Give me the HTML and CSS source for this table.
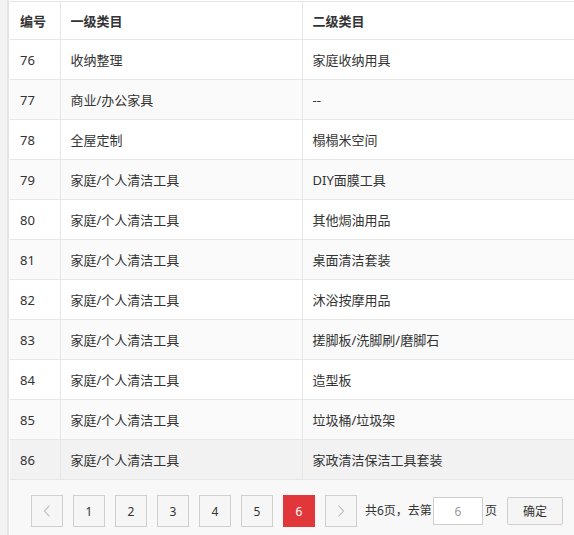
FILE: index.html
```html
<!DOCTYPE html>
<html lang="zh-CN">
<head>
<meta charset="utf-8">
<link rel="stylesheet" href="styles.css">
</head>
<body>
<div class="page">
  <div class="panel">
    <table class="grid">
      <colgroup><col class="c1"><col class="c2"><col class="c3"></colgroup>
      <thead>
        <tr><th>编号</th><th>一级类目</th><th>二级类目</th></tr>
      </thead>
      <tbody>
        <tr><td>76</td><td>收纳整理</td><td>家庭收纳用具</td></tr>
        <tr class="alt"><td>77</td><td>商业/办公家具</td><td>--</td></tr>
        <tr><td>78</td><td>全屋定制</td><td>榻榻米空间</td></tr>
        <tr class="alt"><td>79</td><td>家庭/个人清洁工具</td><td>DIY面膜工具</td></tr>
        <tr><td>80</td><td>家庭/个人清洁工具</td><td>其他焗油用品</td></tr>
        <tr class="alt"><td>81</td><td>家庭/个人清洁工具</td><td>桌面清洁套装</td></tr>
        <tr><td>82</td><td>家庭/个人清洁工具</td><td>沐浴按摩用品</td></tr>
        <tr class="alt"><td>83</td><td>家庭/个人清洁工具</td><td>搓脚板/洗脚刷/磨脚石</td></tr>
        <tr><td>84</td><td>家庭/个人清洁工具</td><td>造型板</td></tr>
        <tr class="alt"><td>85</td><td>家庭/个人清洁工具</td><td>垃圾桶/垃圾架</td></tr>
        <tr class="hover"><td>86</td><td>家庭/个人清洁工具</td><td>家政清洁保洁工具套装</td></tr>
      </tbody>
    </table>
    <div class="pager">
      <span class="pg disabled"><svg width="8" height="12" viewBox="0 0 8 12"><polyline points="6.5,0.5 1.5,6 6.5,11.5" fill="none" stroke="#b8b8b8" stroke-width="1.1"/></svg></span>
      <span class="pg">1</span>
      <span class="pg">2</span>
      <span class="pg">3</span>
      <span class="pg">4</span>
      <span class="pg">5</span>
      <span class="pg current">6</span>
      <span class="pg disabled"><svg width="8" height="12" viewBox="0 0 8 12"><polyline points="1.5,0.5 6.5,6 1.5,11.5" fill="none" stroke="#b8b8b8" stroke-width="1.1"/></svg></span>
      <span class="skip">共6页，去第</span>
      <input class="jump" type="text" value="6">
      <span class="skip-end">页</span>
      <button class="ok" type="button">确定</button>
    </div>
  </div>
</div>
</body>
</html>
```
FILE: styles.css
```css
html, body {
  margin: 0;
  padding: 0;
  overflow: hidden;
  background: #f2f2f2;
}
body {
  font-family: "Noto Sans", "Noto Sans CJK SC", sans-serif;
  font-size: 13px;
  color: #333;
}
.page {
  padding-left: 7px;
  width: 800px;
}
.panel {
  border-left: 2px solid #e4e4e4;
  padding-left: 1px;
  background: #fff;
  padding-top: 1px;
}
.grid {
  border-collapse: collapse;
  table-layout: fixed;
  width: 760px;
  border-top: 1px solid #e6e6e6;
}
.c1 { width: 50px; }
.c2 { width: 242px; }
.c3 { width: 468px; }
.grid th, .grid td {
  padding: 0 10px;
  box-sizing: border-box;
  text-align: left;
  border-right: 1px solid #e6e6e6;
  border-bottom: 1px solid #e6e6e6;
  white-space: nowrap;
  line-height: 20px;
}
.grid th {
  height: 38px;
  font-weight: bold;
  color: #333;
}
.grid tbody td {
  height: 40px;
}
.grid tr.alt td { background: #fafafa; }
.grid tr.hover td { background: #f2f2f2; }
.pager {
  background: #f8f8f8;
  height: 60px;
  padding: 15px 0 0 21px;
  box-sizing: border-box;
  display: flex;
  align-items: flex-start;
  font-size: 12px;
}
.pg {
  width: 32px;
  height: 32px;
  box-sizing: border-box;
  border: 1px solid #cfcfcf;
  background: #f6f6f6;
  margin-right: 10px;
  display: flex;
  align-items: center;
  justify-content: center;
  font-size: 12px;
  color: #333;
}
.pg.current {
  background: #e1373a;
  border-color: #e1373a;
  color: #fff;
}
.skip {
  margin-left: -2px;
  line-height: 32px;
  color: #333;
}
.jump {
  margin: 2px 2px 0 1px;
  width: 50px;
  height: 28px;
  box-sizing: border-box;
  border: 1px solid #cfcfcf;
  background: #fff;
  text-align: center;
  color: #999;
  font-family: inherit;
  font-size: 12px;
  padding: 0;
  outline: none;
}
.skip-end {
  line-height: 32px;
  margin-right: 10px;
}
.ok {
  margin-top: 2px;
  width: 56px;
  height: 28px;
  box-sizing: border-box;
  border: 1px solid #cfcfcf;
  border-radius: 2px;
  background: #f5f5f5;
  font-family: inherit;
  font-size: 12px;
  color: #333;
  padding: 0;
}
```
